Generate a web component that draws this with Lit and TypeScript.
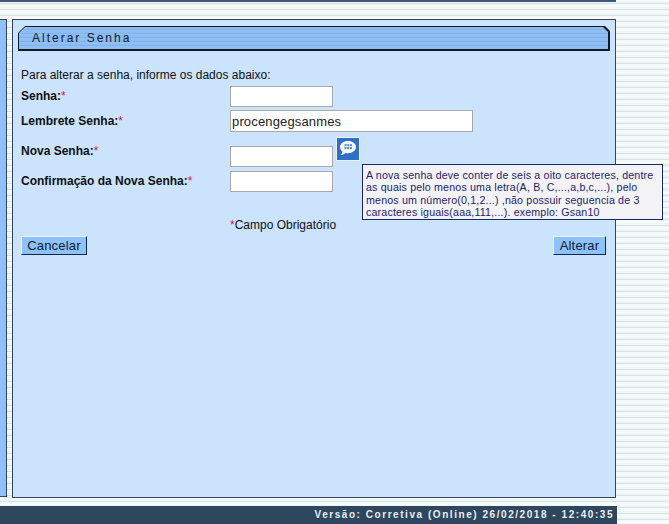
import { LitElement, html, css } from "lit";
import { customElement } from "lit/decorators.js";

@customElement("app-root")
export class AppRoot extends LitElement {
  static styles = css`
    :host { display: block; width: 669px; height: 524px; overflow: hidden; font-family: "Liberation Sans", Arial, sans-serif; font-size: 12px; color: #111; }
    .page { position: relative; width: 669px; height: 524px; display: flex; flex-direction: column; box-sizing: border-box;
      background: repeating-linear-gradient(to bottom, #ffffff 0 1px, #eef6f6 1px 3px, #d3e2e8 3px 4px, #f4f9f9 4px 6px); }
    .top { width: 616px; height: 2px; background: #3f5a72; flex: none; }
    .middle { display: flex; gap: 5px; margin-top: 17px; height: 478px; flex: none; }
    .side { width: 6px; background: #8fc2fb; border: solid #2f465c; border-width: 1px 1px 1px 0; height: 476px; }
    .panel { width: 592px; height: 471px; border: 1px solid #2f465c; background: #cbe3fd; padding: 6px 5px 0 5px; }
    .head-outer { height: 25px; background: #0c1a2c; clip-path: polygon(7px 0, calc(100% - 5px) 0, 100% 5px, 100% 100%, 0 100%, 0 7px); padding: 1px 2px 2px 1px; box-sizing: border-box; }
    .head { height: 100%; clip-path: polygon(6px 0, calc(100% - 5px) 0, 100% 5px, 100% 100%, 0 100%, 0 6px);
      background: repeating-linear-gradient(to bottom, #8dbdf3 0 2px, #7fb1ea 2px 3px, #94c2f5 3px 4px);
      padding-left: 13px; line-height: 23px; letter-spacing: 2px; color: #10202f; font-size: 12px; box-sizing: border-box; }
    .intro { margin: 17px 0 0 3px; height: 14px; line-height: 14px; }
    .form { display: grid; grid-template-columns: 209px 1fr; margin: 4px 0 0 3px; }
    .label { font-weight: bold; padding-top: 3px; height: 21px; box-sizing: border-box; }
    .req { color: #e0103a; font-weight: normal; }
    input { display: block; box-sizing: border-box; height: 21px; border: 1px solid #a9a9a9; background: #fff; padding: 0 1px; margin: 0;
      font: 13px "Liberation Sans", Arial, sans-serif; letter-spacing: 0.15px; color: #222; outline: none; }
    .short { width: 103px; }
    .long { width: 243px; height: 22px; }
    .cell { display: flex; align-items: flex-start; }
    .gap-s { margin-top: 3px; }
    .gap-n { margin-top: 14px; }
    .gap-c { margin-top: 4px; }
    .lembrete { margin-top: 4px; }
    .lift { margin-top: 9px; }
    .lower { margin-top: 4px; }
    .icon { width: 24px; height: 24px; margin: -9px 0 0 3px; display: block; flex: none; }
    .note { margin: 26px 0 0 212px; height: 14px; line-height: 14px; }
    .buttons { display: flex; justify-content: space-between; margin: 4px 4px 0 3px; }
    button { height: 19px; padding: 0; box-sizing: border-box; background: #8ec2fb; color: #10202f; font: 13px "Liberation Sans", Arial, sans-serif; letter-spacing: 0.2px;
      border: 1px solid; border-color: #eaf4ff #10254a #10254a #eaf4ff; line-height: 15px; }
    .cancel { width: 66px; }
    .save { width: 53px; }
    .tip { position: absolute; left: 362px; top: 164px; width: 301px; height: 56px; box-sizing: border-box; background: #f3f3f6; border: 1px solid #14286e; color: #24246e;
      font-size: 10.67px; line-height: 12.3px; padding: 4px 3px 0 3px; letter-spacing: 0.165px; white-space: nowrap; }
    .foot { margin-top: 9px; width: 617px; height: 18px; background: #2f475e; color: #e8eef4; font-weight: bold; font-size: 10px; letter-spacing: 1.55px;
      text-align: right; line-height: 18px; padding-right: 3px; box-sizing: border-box; flex: none; }
  `;

  render() {
    return html`
      <div class="page">
        <div class="top"></div>
        <div class="middle">
          <div class="side"></div>
          <div class="panel">
            <div class="head-outer"><div class="head">Alterar Senha</div></div>
            <div class="intro">Para alterar a senha, informe os dados abaixo:</div>
            <div class="form">
              <div class="label">Senha:<span class="req">*</span></div>
              <div class="cell"><input class="short" type="text" /></div>
              <div class="label lembrete">Lembrete Senha:<span class="req">*</span></div>
              <div class="cell gap-s"><input class="long" type="text" .value=${"procengegsanmes"} /></div>
              <div class="label lift">Nova Senha:<span class="req">*</span></div>
              <div class="cell gap-n">
                <input class="short" type="text" />
                <svg class="icon" viewBox="0 0 24 24" aria-hidden="true">
                  <rect x="0.5" y="0.5" width="23" height="23" fill="#2f6fc6" stroke="#e8f2fc" />
                  <path d="M12 4c4.800 0 8 2.700 8 6.100s-3.200 6.100-8 6.100c-1 0-1.900-.1-2.700-.3-1 1.200-2.800 2.100-4.800 2.200 1-.9 1.700-2.100 1.800-3.500-1.400-1.100-2.300-2.700-2.300-4.500 0-3.400 3.200-6.100 8-6.100z" fill="#f4f8fd" />
                  <g fill="#5585c8">
                    <rect x="8.500" y="7.200" width="2" height="2" /><rect x="11.200" y="7.200" width="2" height="2" /><rect x="13.900" y="7.200" width="2" height="2" />
                    <rect x="8.500" y="10.100" width="2" height="2" /><rect x="11.200" y="10.100" width="2" height="2" /><rect x="13.900" y="10.100" width="2" height="2" />
                  </g>
                </svg>
              </div>
              <div class="label lower">Confirmação da Nova Senha:<span class="req">*</span></div>
              <div class="cell gap-c"><input class="short" type="text" /></div>
            </div>
            <div class="note"><span class="req">*</span>Campo Obrigatório</div>
            <div class="buttons">
              <button class="cancel">Cancelar</button>
              <button class="save">Alterar</button>
            </div>
          </div>
        </div>
        <div class="foot">Versão: Corretiva (Online) 26/02/2018 - 12:40:35</div>
        <div class="tip">A nova senha deve conter de seis a oito caracteres, dentre<br />as quais pelo menos uma letra(A, B, C,...,a,b,c,...), pelo<br />menos um número(0,1,2...) ,não possuir seguencia de 3<br />caracteres iguais(aaa,111,...). exemplo: Gsan10</div>
      </div>
    `;
  }
}
